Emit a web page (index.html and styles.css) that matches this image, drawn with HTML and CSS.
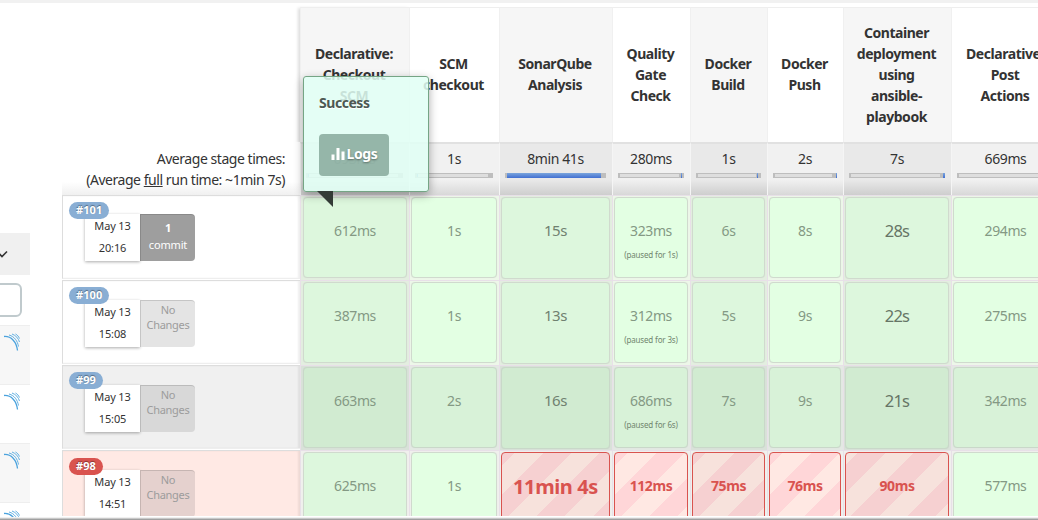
FILE: index.html
```html
<!DOCTYPE html>
<html lang="en">
<head>
<meta charset="utf-8">
<title>Stage View</title>
<link rel="stylesheet" href="styles.css">
</head>
<body>
<svg class="defs" width="0" height="0"><defs>
  <g id="arcs" fill="none" stroke="#62b0e2" stroke-width="1"><path d="M4 4.500c7-.5 12.500 5 13.500 14" stroke="#4aa2dd" stroke-width="1.300"/><path d="M9 3c5.500 1.500 8.500 6 9.500 11.500"/><path d="M12 2c4 1.500 6.500 4.500 7.500 8"/><path d="M15.500 2c2 1 3 2.500 4 4.500"/></g>
</defs></svg>
<div class="topbar"></div>
<div class="layout">
  <aside class="side">
    <div class="side-head"><svg width="12" height="10" viewBox="0 0 12 10"><path d="M-1 3.500 2 6.500 7 1.500" fill="none" stroke="#333" stroke-width="1.600"/></svg></div>
    <div class="side-search"><div class="search-box"></div></div>
    <div class="side-row odd"><svg width="22" height="22"><use href="#arcs"/></svg></div>
    <div class="side-row"><svg width="22" height="22"><use href="#arcs"/></svg></div>
    <div class="side-row odd"><svg width="22" height="22"><use href="#arcs"/></svg></div>
    <div class="side-row"><svg width="22" height="22"><use href="#arcs"/></svg></div>
  </aside>
  <main class="stages">
    <div class="row names">
      <div class="blank"></div>
      <div class="name odd">Declarative:<br>Checkout<br>SCM</div>
      <div class="name">SCM<br>checkout</div>
      <div class="name odd">SonarQube<br>Analysis</div>
      <div class="name">Quality<br>Gate<br>Check</div>
      <div class="name odd">Docker<br>Build</div>
      <div class="name">Docker<br>Push</div>
      <div class="name odd">Container<br>deployment<br>using<br>ansible-<br>playbook</div>
      <div class="name">Declarative:<br>Post<br>Actions</div>
    </div>
    <div class="row averages">
      <div class="avg-label">Average stage times:<br>(Average <u>full</u> run time: ~1min 7s)</div>
      <div class="avg odd">693ms<div class="bar"><i style="width:1%"></i></div></div>
      <div class="avg">1s<div class="bar"><i style="width:1%"></i></div></div>
      <div class="avg odd">8min 41s<div class="bar"><b style="width:94px"></b></div></div>
      <div class="avg">280ms<div class="bar"><b style="margin-left:61px;width:1px"></b></div></div>
      <div class="avg odd">1s<div class="bar"><b style="margin-left:59px;width:1px"></b></div></div>
      <div class="avg">2s<div class="bar"><b style="margin-left:61px;width:1px"></b></div></div>
      <div class="avg odd">7s<div class="bar"><b style="margin-left:92px;width:2px"></b></div></div>
      <div class="avg">669ms<div class="bar"></div></div>
    </div>
    <div class="row run">
      <div class="info"><span class="badge">#101</span><div class="card top"><div class="date">May 13<br>20:16</div><div class="commits"><b>1</b><br>commit</div></div></div>
      <div class="slot odd"><div class="cell">612ms</div></div>
      <div class="slot"><div class="cell">1s</div></div>
      <div class="slot odd"><div class="cell mid">15s</div></div>
      <div class="slot"><div class="cell">323ms<small>(paused for 1s)</small></div></div>
      <div class="slot odd"><div class="cell">6s</div></div>
      <div class="slot"><div class="cell">8s</div></div>
      <div class="slot odd"><div class="cell big">28s</div></div>
      <div class="slot"><div class="cell">294ms</div></div>
    </div>
    <div class="row run">
      <div class="info"><span class="badge">#100</span><div class="card"><div class="date">May 13<br>15:08</div><div class="nochange">No<br>Changes</div></div></div>
      <div class="slot odd"><div class="cell">387ms</div></div>
      <div class="slot"><div class="cell">1s</div></div>
      <div class="slot odd"><div class="cell mid">13s</div></div>
      <div class="slot"><div class="cell">312ms<small>(paused for 3s)</small></div></div>
      <div class="slot odd"><div class="cell">5s</div></div>
      <div class="slot"><div class="cell">9s</div></div>
      <div class="slot odd"><div class="cell big">22s</div></div>
      <div class="slot"><div class="cell">275ms</div></div>
    </div>
    <div class="row run hover">
      <div class="info"><span class="badge">#99</span><div class="card"><div class="date">May 13<br>15:05</div><div class="nochange">No<br>Changes</div></div></div>
      <div class="slot odd"><div class="cell">663ms</div></div>
      <div class="slot"><div class="cell">2s</div></div>
      <div class="slot odd"><div class="cell mid">16s</div></div>
      <div class="slot"><div class="cell">686ms<small>(paused for 6s)</small></div></div>
      <div class="slot odd"><div class="cell">7s</div></div>
      <div class="slot"><div class="cell">9s</div></div>
      <div class="slot odd"><div class="cell big">21s</div></div>
      <div class="slot"><div class="cell">342ms</div></div>
    </div>
    <div class="row run failed">
      <div class="info"><span class="badge">#98</span><div class="card"><div class="date">May 13<br>14:51</div><div class="nochange">No<br>Changes</div></div></div>
      <div class="slot odd"><div class="cell">625ms</div></div>
      <div class="slot"><div class="cell">1s</div></div>
      <div class="slot odd"><div class="cell fail huge">11min 4s</div></div>
      <div class="slot"><div class="cell fail">112ms</div></div>
      <div class="slot odd"><div class="cell fail">75ms</div></div>
      <div class="slot"><div class="cell fail">76ms</div></div>
      <div class="slot odd"><div class="cell fail shifted">90ms</div></div>
      <div class="slot"><div class="cell">577ms</div></div>
    </div>
  </main>
</div>
<div class="bottombar"></div>
<div class="popover">
  <div class="pop-title">Success</div>
  <div class="logs"><svg width="14" height="14" viewBox="0 0 14 14"><path d="M.5 7.500h3V13h-3zM5.500 1h3v12h-3zM10.500 4.500h3V13h-3z" fill="#fff"/></svg><span>Logs</span></div>
  <svg class="tail" width="16" height="16"><path d="M0 0h16v16z" fill="#333b36"/></svg>
</div>
</body>
</html>
```
FILE: styles.css
```css
* { box-sizing: border-box; }
body { margin: 0; width: 1038px; height: 520px; overflow: hidden; background: #fff; color: #333; font: 14px/21px "Noto Sans", sans-serif; letter-spacing: -0.4px; position: relative; display: flex; flex-direction: column; }
.defs { position: absolute; }
.topbar { height: 3px; background: #f1f1f1; flex: none; }
.layout { display: flex; gap: 32px; height: 514px; overflow: hidden; }
.bottombar { height: 3px; background: #f0f0f0; border-bottom: 1px solid #a0a0a0; box-shadow: inset 0 -1px #c8c8c8; flex: none; }

.side { width: 30px; padding-top: 230px; flex: none; overflow: hidden; }
.side-head { height: 42px; background: #f0f0f0; padding-top: 17px; }
.side-head svg, .side-row svg { display: block; }
.side-search { height: 50px; padding-top: 8px; overflow: hidden; }
.search-box { width: 40px; height: 34px; margin-left: -18px; border: 2px solid #c0cacd; border-radius: 6px; }
.side-row { height: 59px; border-top: 1px solid #eee; padding-top: 6px; }
.side-row.odd { background: #f7f7f7; }

.stages { width: 998px; flex: none; padding-top: 4px; }
.row { display: grid; grid-template-columns: 238px 109px 90px 113px 78px 77px 76px 108px 109px; }
.names { height: 135px; }
.name { display: flex; align-items: center; justify-content: center; text-align: center; font-weight: bold; border-top: 1px solid #eee; border-left: 1px solid #f0f0f0; padding: 0 2px 2px 0; letter-spacing: -0.45px; }
.name:nth-child(2) { box-shadow: -2px 1px 3px #0002; }
.name.odd { background: #f6f6f6; }
.averages { height: 53px; }
.avg-label { text-align: right; padding: 6px 15px 0 0; white-space: nowrap; letter-spacing: -.45px; background: linear-gradient(#fff 75%, #f0f0f0); }
.avg { text-align: center; padding: 4px 6px 0 5px; border-top: 2px solid #e1e1e1; border-left: 1px solid #f5f5f5; background: linear-gradient(#f1f1f1 70%, #d8d8d8); }
.avg.odd { background: linear-gradient(#e9e9e9 70%, #cecece); }
.bar { height: 5px; margin-top: 4px; background: #dedede; border: 1px solid #bebebe; border-width: 1px 5px 1px 2px; display: flow-root; }
.bar b { display: block; height: 5px; margin-top: -1px; background: linear-gradient(#7ba5dc, #416fd2); position: relative; }
.bar i { display: block; height: 3px; background: #7faed8; }

.run { height: 85px; }
.info { border: 1px solid #ddd; border-width: 1px 0 1px 1px; border-bottom-color: #eee; padding: 6px 0 0 6px; height: 84px; box-shadow: inset -2px 0 2px #0001; }
.badge { display: block; width: max-content; height: 17px; padding: 0 7px; border-radius: 9px; background: #89aed4; color: #fff; font-size: 11px; line-height: 16px; font-weight: bold; letter-spacing: .1px; text-shadow: 0 -1px 1px #0006; position: relative; }
.card { display: flex; width: 110px; height: 47px; margin: -4px 0 0 16px; font-size: 11px; line-height: 22px; text-align: center; letter-spacing: -.15px; }
.card.top { margin-top: -5px; }
.date { width: 55px; padding-top: 1px; background: #fff; box-shadow: 0 1px 3px #0005; }
.commits, .nochange { width: 55px; border-radius: 0 4px 4px 0; border: 1px solid #0002; border-width: 1px 0 0 1px; }
.commits { background: #9e9e9e; color: #fff; line-height: 17px; padding-top: 4px; }
.nochange { background: #e4e4e4; color: #9c9c9c; line-height: 15px; padding-top: 1px; letter-spacing: -.3px; }
.slot { padding: 2px 2px 2px 1px; border-left: 1px solid #e8e0e8; background: #edf7e9; box-shadow: inset 0 1px #e8e0e8; }
.slot.odd { background: #e3eee0; }
.slot:nth-child(2) { padding-left: 2px; }
.cell { height: 81px; border: 1px solid #d0dace; border-radius: 4px; background: #e3ffe3; color: #849984; text-align: center; padding-top: 22px; white-space: nowrap; box-shadow: 0 0 1px #0001; }
.odd > .cell { background: #ddf7dd; }
.cell small { display: block; font-size: 8px; line-height: 15px; margin-top: 6px; letter-spacing: -.15px; color: #71866f; }
.cell.mid { font-size: 15px; height: 82px; color: #708170; }
.cell.big { font-size: 16.500px; height: 82px; color: #667566; letter-spacing: -.8px; }
.hover .info { background: #f0f0f0; }
.hover .cell { background: #d8f2d8; border-color: #c9d8c9; }
.hover .odd > .cell { background: #d1ebd1; }
.hover .slot { background: #e3e9e3; }
.hover .slot.odd { background: #d9e2d9; }
.hover .nochange { background: #d8d8d8; }
.failed { height: 66px; overflow: hidden; }
.failed .info { background: #ffe9e4; }
.failed .badge { background: #d9534f; margin-top: 1px; }
.failed .card { margin-top: -5px; }
.failed .nochange { background: #e5d1ce; }
.failed .slot { background: #f0f0ed; }
.failed .fail { color: #d9534f; font-weight: bold; border: 1px solid #d9534f; background: repeating-linear-gradient(135deg, #ffd6d8 0 9px, #ffe8e3 9px 29px, #ffd6d8 29px 40px); }
.failed .odd > .fail { background: repeating-linear-gradient(135deg, #f6d0d1 0 9px, #f7e2dc 9px 29px, #f6d0d1 29px 40px); }
.failed .odd > .shifted { background: repeating-linear-gradient(135deg, #f7e2dc 0 8px, #f6d0d1 8px 28px, #f7e2dc 28px 40px); }
.cell.huge { font-size: 20px; letter-spacing: -.4px; padding-top: 23px; }

.popover { position: absolute; left: 303px; top: 76px; width: 126px; height: 116px; padding: 16px 15px; border: 1px solid #75a585; border-radius: 3px; background: rgba(225, 255, 244, .86); box-shadow: 0 3px 10px #0005; }
.pop-title { font-weight: bold; color: #4d5852; font-size: 14px; line-height: 20px; letter-spacing: -.45px; text-shadow: 0 1px #fff; }
.logs { display: flex; align-items: center; justify-content: center; gap: 2px; width: 70px; height: 42px; margin-top: 21px; padding-bottom: 3px; border-radius: 4px; background: rgba(132, 166, 152, .82); color: #fff; font-weight: bold; text-shadow: 0 1px 2px #0006; }
.tail { position: absolute; left: 13px; top: 114px; }
```
